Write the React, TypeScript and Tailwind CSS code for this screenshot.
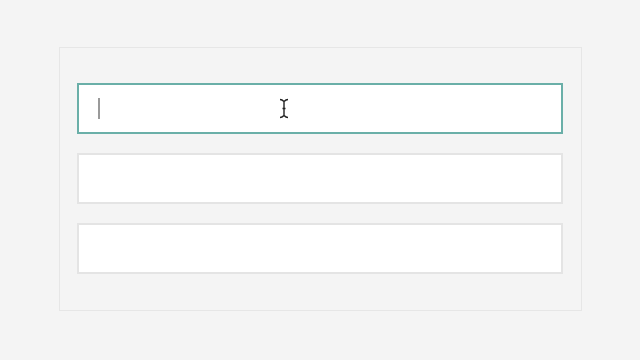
export default function App() {
  return (
    <div className="flex min-h-screen w-full items-center justify-center bg-[#f4f4f4] font-['Liberation_Sans',sans-serif]">
      <div className="relative mt-[-2px] h-[264px] w-[523px] border border-[#e6e6e6] bg-[#f4f4f4] pl-[17px] pr-[18px] pt-[35px]">
        <div className="flex flex-col gap-[19px]">
          <div className="flex h-[51px] w-full items-center border-2 border-[#6aafa8] bg-white pl-[19px]">
            <div className="h-[21px] w-[2px] bg-[#9a9a9a]" />
          </div>
          <div className="h-[51px] w-full border-2 border-[#e4e4e4] bg-white" />
          <div className="h-[51px] w-full border-2 border-[#e4e4e4] bg-white" />
        </div>
        <svg
          className="pointer-events-none absolute left-[219px] top-[50px]"
          width="10"
          height="21"
          viewBox="0 0 10 21"
        >
          <path
            d="M1 1.5 Q3 1.5 5 3.5 Q7 1.5 9 1.5 M5 3.5 V17.5 M1 19.5 Q3 19.5 5 17.5 Q7 19.5 9 19.5 M3.5 10.5 H6.5"
            fill="none"
            stroke="#222"
            strokeWidth="1.4"
          />
        </svg>
      </div>
    </div>
  );
}
